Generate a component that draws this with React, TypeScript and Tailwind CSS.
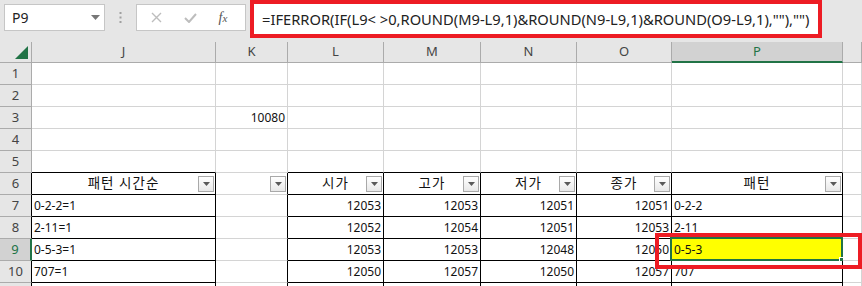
import React from "react";

const cols = ["J", "K", "L", "M", "N", "O", "P", ""];
const widths = ["w-[184px]", "w-[72px]", "w-[96px]", "w-[97px]", "w-[96px]", "w-[95px]", "w-[171px]", "flex-1"];
const tableCols = [0, 2, 3, 4, 5, 6];

type Cell = { text: string; align?: "left" | "right" | "center"; dd?: boolean; kr?: boolean };

const data: Record<number, Record<number, Cell>> = {
  3: { 1: { text: "10080", align: "right" } },
  6: {
    0: { text: "패턴 시간순", align: "center", dd: true, kr: true },
    1: { text: "", dd: true },
    2: { text: "시가", align: "center", dd: true, kr: true },
    3: { text: "고가", align: "center", dd: true, kr: true },
    4: { text: "저가", align: "center", dd: true, kr: true },
    5: { text: "종가", align: "center", dd: true, kr: true },
    6: { text: "패턴", align: "center", dd: true, kr: true },
  },
  7: {
    0: { text: "0-2-2=1" },
    2: { text: "12053", align: "right" },
    3: { text: "12053", align: "right" },
    4: { text: "12051", align: "right" },
    5: { text: "12051", align: "right" },
    6: { text: "0-2-2" },
  },
  8: {
    0: { text: "2-11=1" },
    2: { text: "12052", align: "right" },
    3: { text: "12054", align: "right" },
    4: { text: "12051", align: "right" },
    5: { text: "12053", align: "right" },
    6: { text: "2-11" },
  },
  9: {
    0: { text: "0-5-3=1" },
    2: { text: "12053", align: "right" },
    3: { text: "12053", align: "right" },
    4: { text: "12048", align: "right" },
    5: { text: "12050", align: "right" },
    6: { text: "0-5-3" },
  },
  10: {
    0: { text: "707=1" },
    2: { text: "12050", align: "right" },
    3: { text: "12057", align: "right" },
    4: { text: "12050", align: "right" },
    5: { text: "12057", align: "right" },
    6: { text: "707" },
  },
};

const Dropdown = () => (
  <div className="absolute right-[1px] top-[3px] w-[16px] h-[16px] border border-[#a9a9a9] bg-gradient-to-b from-white to-[#e8e8e8] flex items-center justify-center">
    <svg width="7" height="4" viewBox="0 0 7 4">
      <polygon points="0,0 7,0 3.5,4" fill="#595959" />
    </svg>
  </div>
);

const GridCell: React.FC<{ r: number; c: number }> = ({ r, c }) => {
  const cell = data[r]?.[c];
  const inTable = tableCols.includes(c) && r >= 6;
  const rightBlack = r >= 6 && (inTable || c === 1);
  const bottomBlack = tableCols.includes(c) && r >= 5;
  const selected = r === 9 && c === 6;
  return (
    <div
      className={`relative h-[22px] shrink-0 ${widths[c]} border-r border-b ${
        rightBlack ? "border-r-black" : "border-r-[#d4d4d4]"
      } ${bottomBlack ? "border-b-black" : "border-b-[#d4d4d4]"} ${selected ? "bg-[#ffff00]" : "bg-white"} flex items-center ${
        cell?.align === "right" ? "justify-end pr-[2px]" : cell?.align === "center" ? "justify-center" : "justify-start pl-[2px]"
      }`}
    >
      {cell && (
        <span className={cell.kr ? "text-[13.5px] tracking-[1px] text-[#111]" : "text-[12px] text-[#111]"}>{cell.text}</span>
      )}
      {cell?.dd && <Dropdown />}
      {selected && (
        <div className="absolute left-[-2px] top-[-2px] right-[-1px] bottom-[-1px] border-2 border-[#217346]">
          <div className="absolute right-[-4px] bottom-[-4px] w-[6px] h-[6px] bg-[#217346] border border-white" />
        </div>
      )}
    </div>
  );
};

export default function App() {
  const rows = [1, 2, 3, 4, 5, 6, 7, 8, 9, 10, 11];
  return (
    <div
      className="relative w-[862px] h-[286px] overflow-hidden bg-white"
      style={{ fontFamily: '"Noto Sans", "Noto Sans CJK KR", sans-serif' }}
    >
      {/* formula bar */}
      <div className="h-[42px] bg-[#e6e6e6] flex items-start pt-[4px] pl-[4px]">
        <div className="w-[101px] h-[27px] bg-white border border-[#c6c6c6] flex items-center justify-between pl-[7px] pr-[4px]">
          <span className="text-[14px] text-[#222]">P9</span>
          <svg width="9" height="5" viewBox="0 0 9 5">
            <polygon points="0,0 9,0 4.5,5" fill="#777" />
          </svg>
        </div>
        <div className="w-[31px] h-[27px] flex items-center justify-center">
          <svg width="3" height="11" viewBox="0 0 3 11">
            <rect x="0.5" y="0" width="2" height="2" fill="#a0a0a0" />
            <rect x="0.5" y="4.5" width="2" height="2" fill="#a0a0a0" />
            <rect x="0.5" y="9" width="2" height="2" fill="#a0a0a0" />
          </svg>
        </div>
        <div className="w-[110px] h-[27px] bg-white border border-[#c6c6c6] flex items-center">
          <div className="w-[38px] flex justify-center">
            <svg width="11" height="11" viewBox="0 0 11 11">
              <path d="M1 1 L10 10 M10 1 L1 10" stroke="#bdbdbd" strokeWidth="1.4" />
            </svg>
          </div>
          <div className="w-[30px] flex justify-center">
            <svg width="13" height="10" viewBox="0 0 13 10">
              <path d="M1 5 L5 9 L12 1" stroke="#bdbdbd" strokeWidth="2" fill="none" />
            </svg>
          </div>
          <div className="w-[36px] flex justify-center">
            <span className="text-[14px] italic text-[#555]" style={{ fontFamily: '"Liberation Serif", serif' }}>
              f<span className="text-[11px]">x</span>
            </span>
          </div>
        </div>
      </div>
      {/* formula input with red annotation */}
      <div className="absolute left-[250px] top-0 w-[572px] h-[38px] border-[4px] border-[#ed1c24] bg-white flex items-center pl-[8px]">
        <span className="text-[14.7px] text-[#222] whitespace-nowrap">
          =IFERROR(IF(L9&lt; &gt;0,ROUND(M9-L9,1)&amp;ROUND(N9-L9,1)&amp;ROUND(O9-L9,1),""),"")
        </span>
      </div>

      {/* column headers */}
      <div className="flex h-[21px] bg-[#e6e6e6]">
        <div className="w-[32px] shrink-0 border-r border-b border-[#ababab] relative">
          <svg className="absolute right-[3px] bottom-[3px]" width="13" height="13" viewBox="0 0 13 13">
            <polygon points="13,0 13,13 0,13" fill="#217346" />
          </svg>
        </div>
        {cols.map((c, i) => (
          <div
            key={i}
            className={`shrink-0 ${widths[i]} flex items-center justify-center text-[13px] ${
              c === "P"
                ? "bg-[#d2d2d2] text-[#217346] border-b-2 border-b-[#217346] border-r border-r-[#ababab]"
                : "text-[#444] border-b border-r border-[#ababab]"
            }`}
          >
            {c}
          </div>
        ))}
      </div>

      {/* rows */}
      {rows.map((r) => (
        <div key={r} className="flex h-[22px]">
          <div
            className={`w-[32px] shrink-0 h-[22px] flex items-center justify-center text-[13px] border-b border-b-[#ababab] ${
              r === 9
                ? "bg-[#d2d2d2] text-[#217346] border-r-2 border-r-[#217346]"
                : `bg-[#e6e6e6] text-[#444] border-r ${r >= 6 ? "border-r-black" : "border-r-[#ababab]"}`
            }`}
          >
            {r <= 10 ? r : ""}
          </div>
          {cols.map((_, c) => (
            <GridCell key={c} r={r} c={c} />
          ))}
        </div>
      ))}

      {/* red annotation around P9 */}
      <div className="absolute left-[655px] top-[233px] w-[207px] h-[36px] border-[4px] border-[#ed1c24]" />
    </div>
  );
}
